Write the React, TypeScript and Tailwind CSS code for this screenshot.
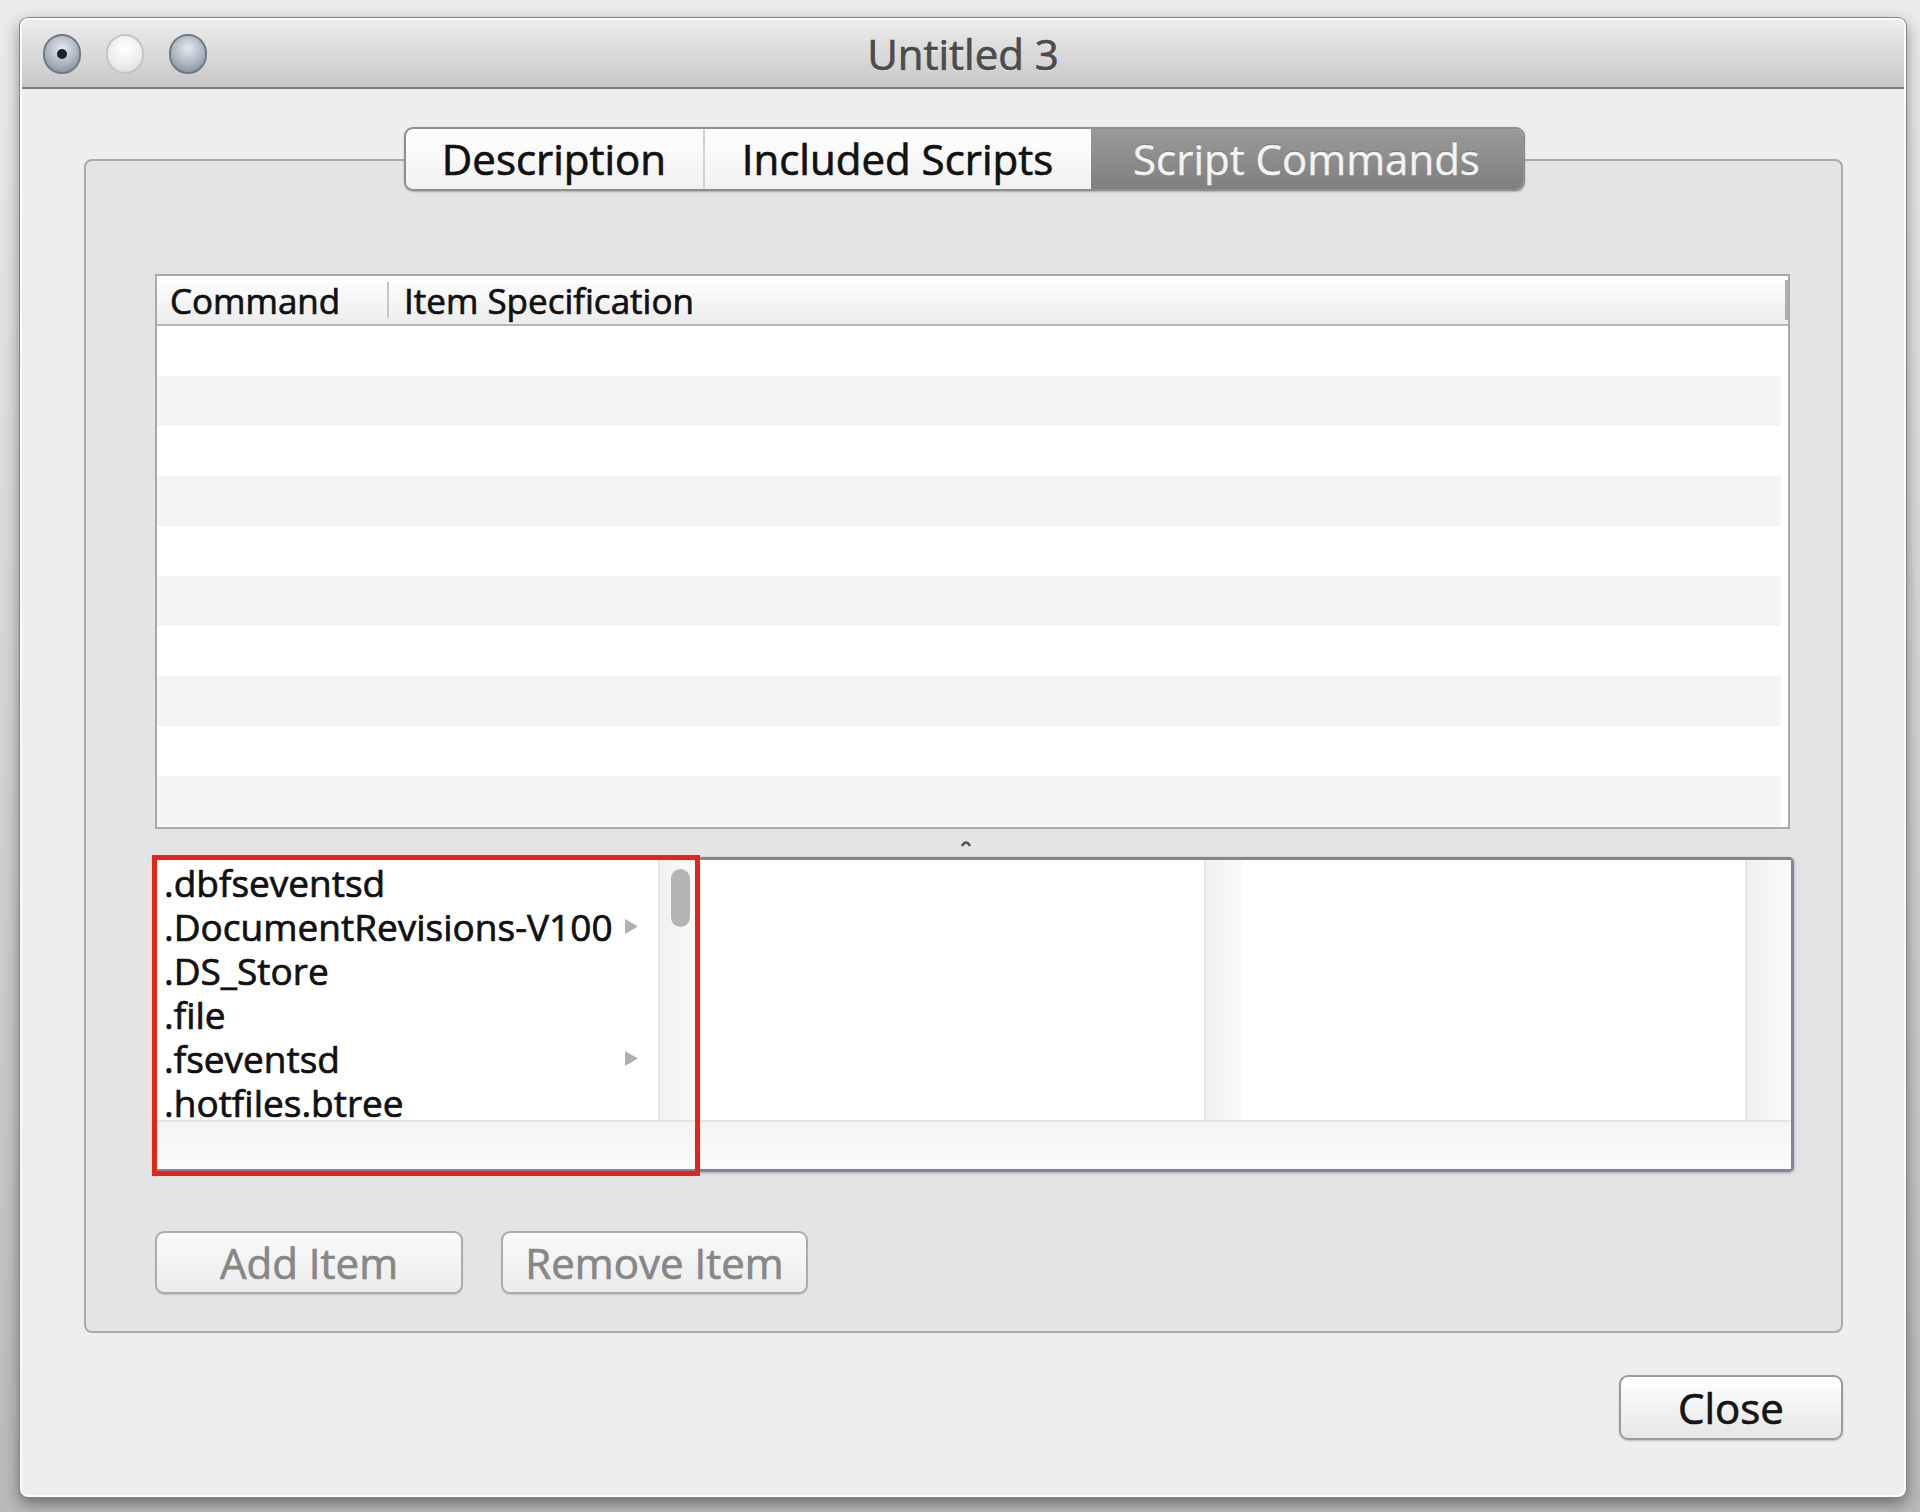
import React from "react";

const rows = Array.from({ length: 10 }, (_, i) => i);

const files = [
  { name: ".dbfseventsd", folder: false },
  { name: ".DocumentRevisions-V100", folder: true },
  { name: ".DS_Store", folder: false },
  { name: ".file", folder: false },
  { name: ".fseventsd", folder: true },
  { name: ".hotfiles.btree", folder: false },
];

// Lucida Grande reads heavier than Open Sans regular
const heavy = "[-webkit-text-stroke:0.7px_currentcolor]";

function Arrow() {
  return (
    <svg width="15" height="17" viewBox="0 0 15 17">
      <path d="M1 1 L14 8.5 L1 16 Z" fill="#b0b0b0" />
    </svg>
  );
}

function Light({ kind }: { kind: "dot" | "dim" | "plain" }) {
  if (kind === "dim") {
    return (
      <div className="w-[38px] h-[40px] rounded-full border-2 border-[#c4c4c4] bg-[radial-gradient(circle_at_50%_35%,#ffffff_0%,#ececec_60%,#d6d6d6_100%)]" />
    );
  }
  return (
    <div className="w-[38px] h-[40px] rounded-full border-2 border-[#6f7a86] bg-[radial-gradient(circle_at_50%_35%,#e6eaee_0%,#a9b4bf_55%,#77838f_100%)] flex items-center justify-center">
      {kind === "dot" && <div className="w-[10px] h-[10px] rounded-full bg-[#1e2226]" />}
    </div>
  );
}

function Scroller({ thumb }: { thumb?: boolean }) {
  return (
    <div className="h-full bg-[linear-gradient(90deg,#f1f1f1,#fafafa)] border-l-2 border-[#e6e6e6] pt-[9px] pl-[11px]">
      {thumb && <div className="w-[19px] h-[58px] rounded-full bg-[#b4b4b4]" />}
    </div>
  );
}

export default function App() {
  return (
    <div className="w-[1920px] h-[1512px] bg-[linear-gradient(#ebebeb,#b9b9b9)] pt-[18px] pl-[20px] font-['Open_Sans',sans-serif]">
      <div className="w-[1886px] h-[1479px] rounded-[8px] border-2 border-[#fbfbfb] bg-[#eeeeee] shadow-[0_0_0_1px_#858585,0_6px_16px_rgba(0,0,0,0.45)] flex flex-col overflow-hidden">
        {/* title bar */}
        <div className="h-[69px] shrink-0 bg-[linear-gradient(#ececec,#c8c8c8)] border-b-2 border-[#7b7b7b] grid grid-cols-[1fr_auto_1fr] items-center">
          <div className="flex items-center gap-[25px] pl-[21px]">
            <Light kind="dot" />
            <Light kind="dim" />
            <Light kind="plain" />
          </div>
          <div className={`text-[42px] leading-none text-[#4b4b4b] [text-shadow:0_1px_0_#f4f4f4] ${heavy}`}>
            Untitled 3
          </div>
          <div />
        </div>

        {/* body */}
        <div className="flex flex-col pt-[38px]">
          {/* tabs */}
          <div className="relative z-10 flex justify-center pl-[2px]">
            <div className="flex h-[64px] rounded-[9px] border-2 border-[#8e8e8e] bg-[linear-gradient(#ffffff,#f1f1f1)] overflow-hidden shadow-[0_1px_2px_rgba(0,0,0,0.25)]">
              <div className={`w-[299px] flex items-center justify-center text-[42px] leading-none text-[#111] border-r-2 border-[#d2d2d2] ${heavy}`}>
                Description
              </div>
              <div className={`w-[386px] flex items-center justify-center text-[42px] leading-none text-[#111] ${heavy}`}>
                Included Scripts
              </div>
              <div className="w-[432px] flex items-center justify-center text-[42px] leading-none text-[#f3f3f3] bg-[linear-gradient(#9a9a9a,#7f7f7f)] [text-shadow:0_-1px_0_#6a6a6a] [-webkit-text-stroke:0.4px_currentcolor]">
                Script Commands
              </div>
            </div>
          </div>

          {/* group box */}
          <div className="-mt-[32px] ml-[62px] w-[1759px] rounded-[8px] border-2 border-[#ababab] bg-[#e4e4e4] pt-[113px] pb-[37px] flex flex-col">
            {/* table */}
            <div className="ml-[69px] w-[1635px] h-[555px] border-2 border-[#a9a9a9] bg-white flex flex-col">
              <div className={`h-[50px] shrink-0 bg-[linear-gradient(#ffffff,#ececec)] border-b-2 border-[#b4b4b4] flex items-center text-[35px] leading-none text-[#111] ${heavy}`}>
                <div className="w-[230px] pl-[13px]">Command</div>
                <div className="w-[2px] h-[36px] bg-[#c6c6c6]" />
                <div className="flex-1 pl-[15px]">Item Specification</div>
                <div className="w-[3px] h-[40px] bg-[#b0b0b0]" />
              </div>
              <div className="flex-1 flex flex-col pr-[7px]">
                {rows.map((i) => (
                  <div key={i} className={i % 2 === 0 ? "h-[50px] bg-white" : "h-[50px] bg-[#f3f5f7]"} />
                ))}
              </div>
            </div>

            {/* splitter */}
            <div className="h-[28px] flex items-center justify-center pl-[5px]">
              <svg width="12" height="8" viewBox="0 0 12 8">
                <path d="M2 7 Q6 0 10 7" stroke="#555" strokeWidth="2.5" fill="none" />
              </svg>
            </div>

            {/* browser */}
            <div className="relative ml-[67px] w-[1641px] h-[315px]">
              <div className="w-full h-full rounded-[5px] border-[3px] border-[#7d8795] bg-white flex flex-col shadow-[0_1px_3px_rgba(60,70,85,0.4)]">
                <div className="h-[260px] flex">
                  <div className="w-[542px] flex">
                    <div className="flex-1 flex flex-col">
                      {files.map((f) => (
                        <div key={f.name} className="h-[44px] shrink-0 flex items-center justify-between pl-[8px] pr-[19px]">
                          <span className={`text-[37px] leading-none text-[#111] ${heavy}`}>{f.name}</span>
                          {f.folder && <Arrow />}
                        </div>
                      ))}
                    </div>
                    <div className="w-[40px]">
                      <Scroller thumb />
                    </div>
                  </div>
                  <div className="w-[545px] flex">
                    <div className="flex-1" />
                    <div className="w-[39px]">
                      <Scroller />
                    </div>
                  </div>
                  <div className="flex-1 flex">
                    <div className="flex-1" />
                    <div className="w-[46px]">
                      <Scroller />
                    </div>
                  </div>
                </div>
                <div className="flex-1 border-t-2 border-[#e4e4e4] bg-[linear-gradient(#f4f4f4,#fbfbfb)]" />
              </div>
              {/* red annotation */}
              <div className="absolute -left-[1px] -top-[2px] w-[548px] h-[321px] border-[5px] border-[#e4241b]" />
            </div>

            {/* buttons */}
            <div className="mt-[59px] ml-[69px] flex gap-[38px]">
              <div className={`w-[308px] h-[63px] rounded-[9px] border-2 border-[#acacac] bg-[linear-gradient(#fafafa,#ececec)] shadow-[0_1px_1px_rgba(0,0,0,0.15)] flex items-center justify-center text-[42px] leading-none text-[#878787] ${heavy}`}>
                Add Item
              </div>
              <div className={`w-[307px] h-[63px] rounded-[9px] border-2 border-[#acacac] bg-[linear-gradient(#fafafa,#ececec)] shadow-[0_1px_1px_rgba(0,0,0,0.15)] flex items-center justify-center text-[42px] leading-none text-[#878787] ${heavy}`}>
                Remove Item
              </div>
            </div>
          </div>

          {/* close */}
          <div className="mt-[42px] flex justify-end pr-[61px]">
            <div className={`w-[224px] h-[65px] rounded-[9px] border-2 border-[#9b9b9b] bg-[linear-gradient(#ffffff,#e6e6e6)] shadow-[0_1px_2px_rgba(0,0,0,0.2)] flex items-center justify-center text-[42px] leading-none text-[#151515] ${heavy}`}>
              Close
            </div>
          </div>
        </div>
      </div>
    </div>
  );
}
